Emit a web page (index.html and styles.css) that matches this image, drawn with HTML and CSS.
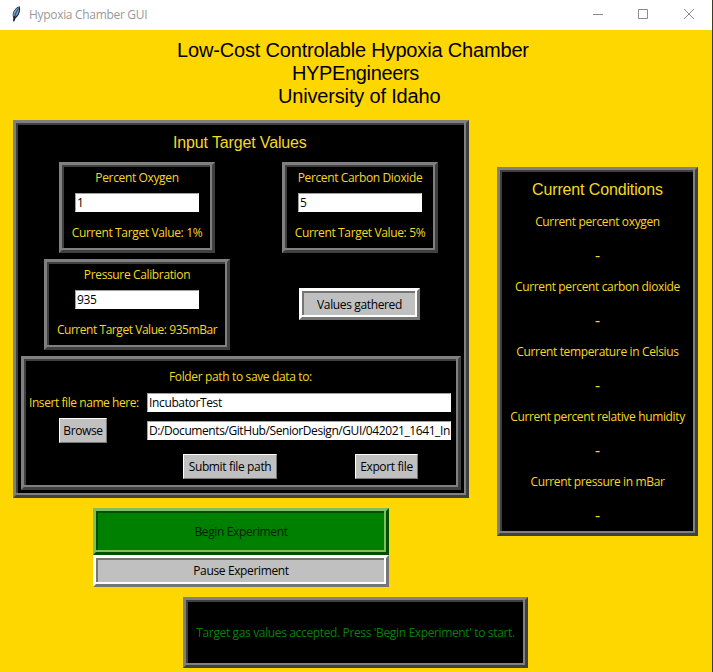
FILE: index.html
```html
<!DOCTYPE html>
<html lang="en">
<head>
<meta charset="utf-8">
<title>Hypoxia Chamber GUI</title>
<link rel="stylesheet" href="styles.css">
</head>
<body>
<div class="window">
  <header class="titlebar">
    <svg class="feather" width="10" height="16" viewBox="0 0 10 16">
      <path d="M2.2 15.500 L2.400 12 C.2 8 3.500 1.500 8.600.3 C10 4 8.500 9.500 4.800 12 L3.200 15.500Z" fill="#1b2737"/>
      <path d="M2.300 10 C2 6.500 4.300 2.800 7.800 1.300 C8.600 5 7 9 4 10.800Z" fill="#7aa3cf"/>
      <path d="M2.600 15 C3.400 10 5 6 7.500 2.500" fill="none" stroke="#17202c" stroke-width=".8"/>
    </svg>
    <span class="caption">Hypoxia Chamber GUI</span>
    <svg class="controls" width="104" height="12" viewBox="0 0 104 12" fill="none" stroke="#8c8c8c">
      <path d="M0 6.500H10M45.500 1.500H54.500V10.500H45.500ZM91 1L101 11M101 1L91 11"/>
    </svg>
  </header>

  <div class="headline">
    <div class="line one">Low-Cost Controlable Hypoxia Chamber</div>
    <div class="line two">HYPEngineers</div>
    <div class="line three">University of Idaho</div>
  </div>

  <main class="workspace">
    <section class="ridge targets">
      <h2 class="heading">Input Target Values</h2>
      <div class="row gases">
        <div class="ridge gauge">
          <label>Percent Oxygen</label>
          <div class="entry">1</div>
          <p>Current Target Value: 1%</p>
        </div>
        <div class="ridge gauge">
          <label>Percent Carbon Dioxide</label>
          <div class="entry">5</div>
          <p>Current Target Value: 5%</p>
        </div>
      </div>
      <div class="row calibration">
        <div class="ridge gauge wide">
          <label>Pressure Calibration</label>
          <div class="entry">935</div>
          <p>Current Target Value: 935mBar</p>
        </div>
        <button class="ridge silver gathered">Values gathered</button>
      </div>
      <div class="ridge folder">
        <p class="folder-title">Folder path to save data to:</p>
        <div class="folder-row">
          <span class="name-label">Insert file name here:</span>
          <div class="entry long">IncubatorTest</div>
        </div>
        <div class="folder-row second">
          <span class="browse-cell"><button class="flat browse">Browse</button></span>
          <div class="entry long path">D:/Documents/GitHub/SeniorDesign/GUI/042021_1641_In</div>
        </div>
        <div class="actions">
          <button class="flat submit">Submit file path</button>
          <button class="flat export">Export file</button>
        </div>
      </div>
    </section>

    <section class="ridge conditions">
      <h2 class="heading">Current Conditions</h2>
      <dl>
        <dt>Current percent oxygen</dt><dd>-</dd>
        <dt>Current percent carbon dioxide</dt><dd>-</dd>
        <dt>Current temperature in Celsius</dt><dd>-</dd>
        <dt>Current percent relative humidity</dt><dd>-</dd>
        <dt>Current pressure in mBar</dt><dd>-</dd>
      </dl>
    </section>
  </main>

  <div class="experiment">
    <button class="ridge begin">Begin Experiment</button>
    <button class="ridge silver pause">Pause Experiment</button>
  </div>
  <div class="ridge status">Target gas values accepted. Press 'Begin Experiment' to start.</div>
</div>
</body>
</html>
```

FILE: styles.css
```css
* { box-sizing: border-box; }
body, h2, p, dl, dd { margin: 0; }
body {
  font: 12px/19px "Open Sans", "Noto Sans", sans-serif;
  letter-spacing: -0.36px;
  white-space: nowrap;
}
button {
  font: inherit;
  letter-spacing: inherit;
  color: #000;
  padding: 0;
  margin: 0;
  border-radius: 0;
}
.window {
  width: 713px;
  height: 672px;
  overflow: hidden;
  background: #ffd700;
  border-right: 1px solid #3a3d20;
}
.titlebar {
  height: 30px;
  background: #fff;
  display: flex;
  align-items: center;
  padding: 0 15px 0 11px;
}
.feather { margin-top: -3px; }
.caption { margin-left: 8px; margin-top: -1px; color: #999; letter-spacing: -0.31px; }
.controls { margin-left: auto; margin-top: -2px; }
.headline {
  height: 90px;
  padding-top: 9px;
  font: 20px/23px "Liberation Sans", Arial, sans-serif;
  letter-spacing: -0.17px;
  color: #000;
}
.one { padding-left: 177px; }
.two { padding-left: 292px; letter-spacing: -0.35px; }
.three { padding-left: 278px; }

/* Two-tone raised ridge shared by frames and buttons */
.ridge {
  --light: #808080;
  --dark: #404040;
  border: 3px solid;
  border-color: var(--light) var(--dark) var(--dark) var(--light);
  box-shadow: inset -2px -2px var(--light), inset 2px 2px var(--dark);
  background-color: #000;
  color: #f5d923;
}
.silver {
  --light: #fff;
  --dark: #757575;
  background-color: #c0c0c0;
  color: #000;
}
.workspace { display: flex; align-items: flex-start; height: 388px; }
.targets { width: 456px; height: 378px; margin-left: 13px; padding: 0 5px; }
.heading {
  font: 16px/20px "Liberation Sans", Arial, sans-serif;
  letter-spacing: -0.14px;
}
.targets .heading { padding: 10px 0 0 152px; }
.row { display: flex; }
.gases { margin-top: 9px; padding-left: 38px; gap: 67px; }
.gauge {
  width: 156px;
  height: 91px;
  padding-top: 3px;
  display: flex;
  flex-direction: column;
  align-items: center;
}
.gauge.wide { width: 186px; }
.gauge p { margin-top: 11px; }
.gauge.wide p { letter-spacing: -0.45px; }
.entry {
  width: 124px;
  height: 19px;
  line-height: 18px;
  margin-top: 6px;
  padding-left: 1px;
  background: #fff;
  color: #000;
  border: 1px solid #fff;
  border-top-color: #a0a0a0;
  border-left-color: #a0a0a0;
  overflow: hidden;
}
.calibration { margin-top: 6px; padding-left: 23px; gap: 69px; align-items: flex-start; }
.gathered { width: 121px; height: 32px; margin-top: 29px; }
.folder { width: 440px; height: 134px; margin-top: 6px; padding: 8px 6px 0 5px; }
.folder-title { padding-left: 140px; }
.folder-row { display: flex; align-items: center; margin-top: 7px; height: 19px; }
.folder-row .entry { margin-top: 0; }
.folder-row.second { margin-top: 9px; }
.name-label, .browse-cell { width: 118px; flex: none; }
.name-label { letter-spacing: -0.43px; }
.browse-cell { padding-left: 30px; display: flex; }
.entry.long { width: 304px; }
.entry.path { letter-spacing: -0.42px; }
.flat {
  height: 25px;
  background: #c0c0c0;
  border: 1px solid;
  border-color: #fff #777 #777 #fff;
}
.browse { width: 48px; }
.actions { display: flex; margin-top: 14px; padding-left: 154px; gap: 78px; }
.submit { width: 94px; }
.export { width: 63px; }

.conditions {
  width: 201px;
  height: 369px;
  margin: 47px 0 0 28px;
  text-align: center;
}
.conditions .heading { padding-top: 10px; }
dl { padding-top: 12px; }
dt { height: 19px; }
dd { height: 46px; padding-top: 15px; font-size: 16px; }

.experiment { width: 296px; margin-left: 93px; display: flex; flex-direction: column; }
.begin {
  --light: #7fbf60;
  --dark: #005000;
  height: 47px;
  background-color: #008000;
  color: #001c00;
}
.pause { height: 32px; padding-bottom: 1px; }
.status {
  width: 345px;
  height: 71px;
  margin: 10px 0 0 183px;
  line-height: 65px;
  text-align: center;
  color: #0a800a;
}
```
